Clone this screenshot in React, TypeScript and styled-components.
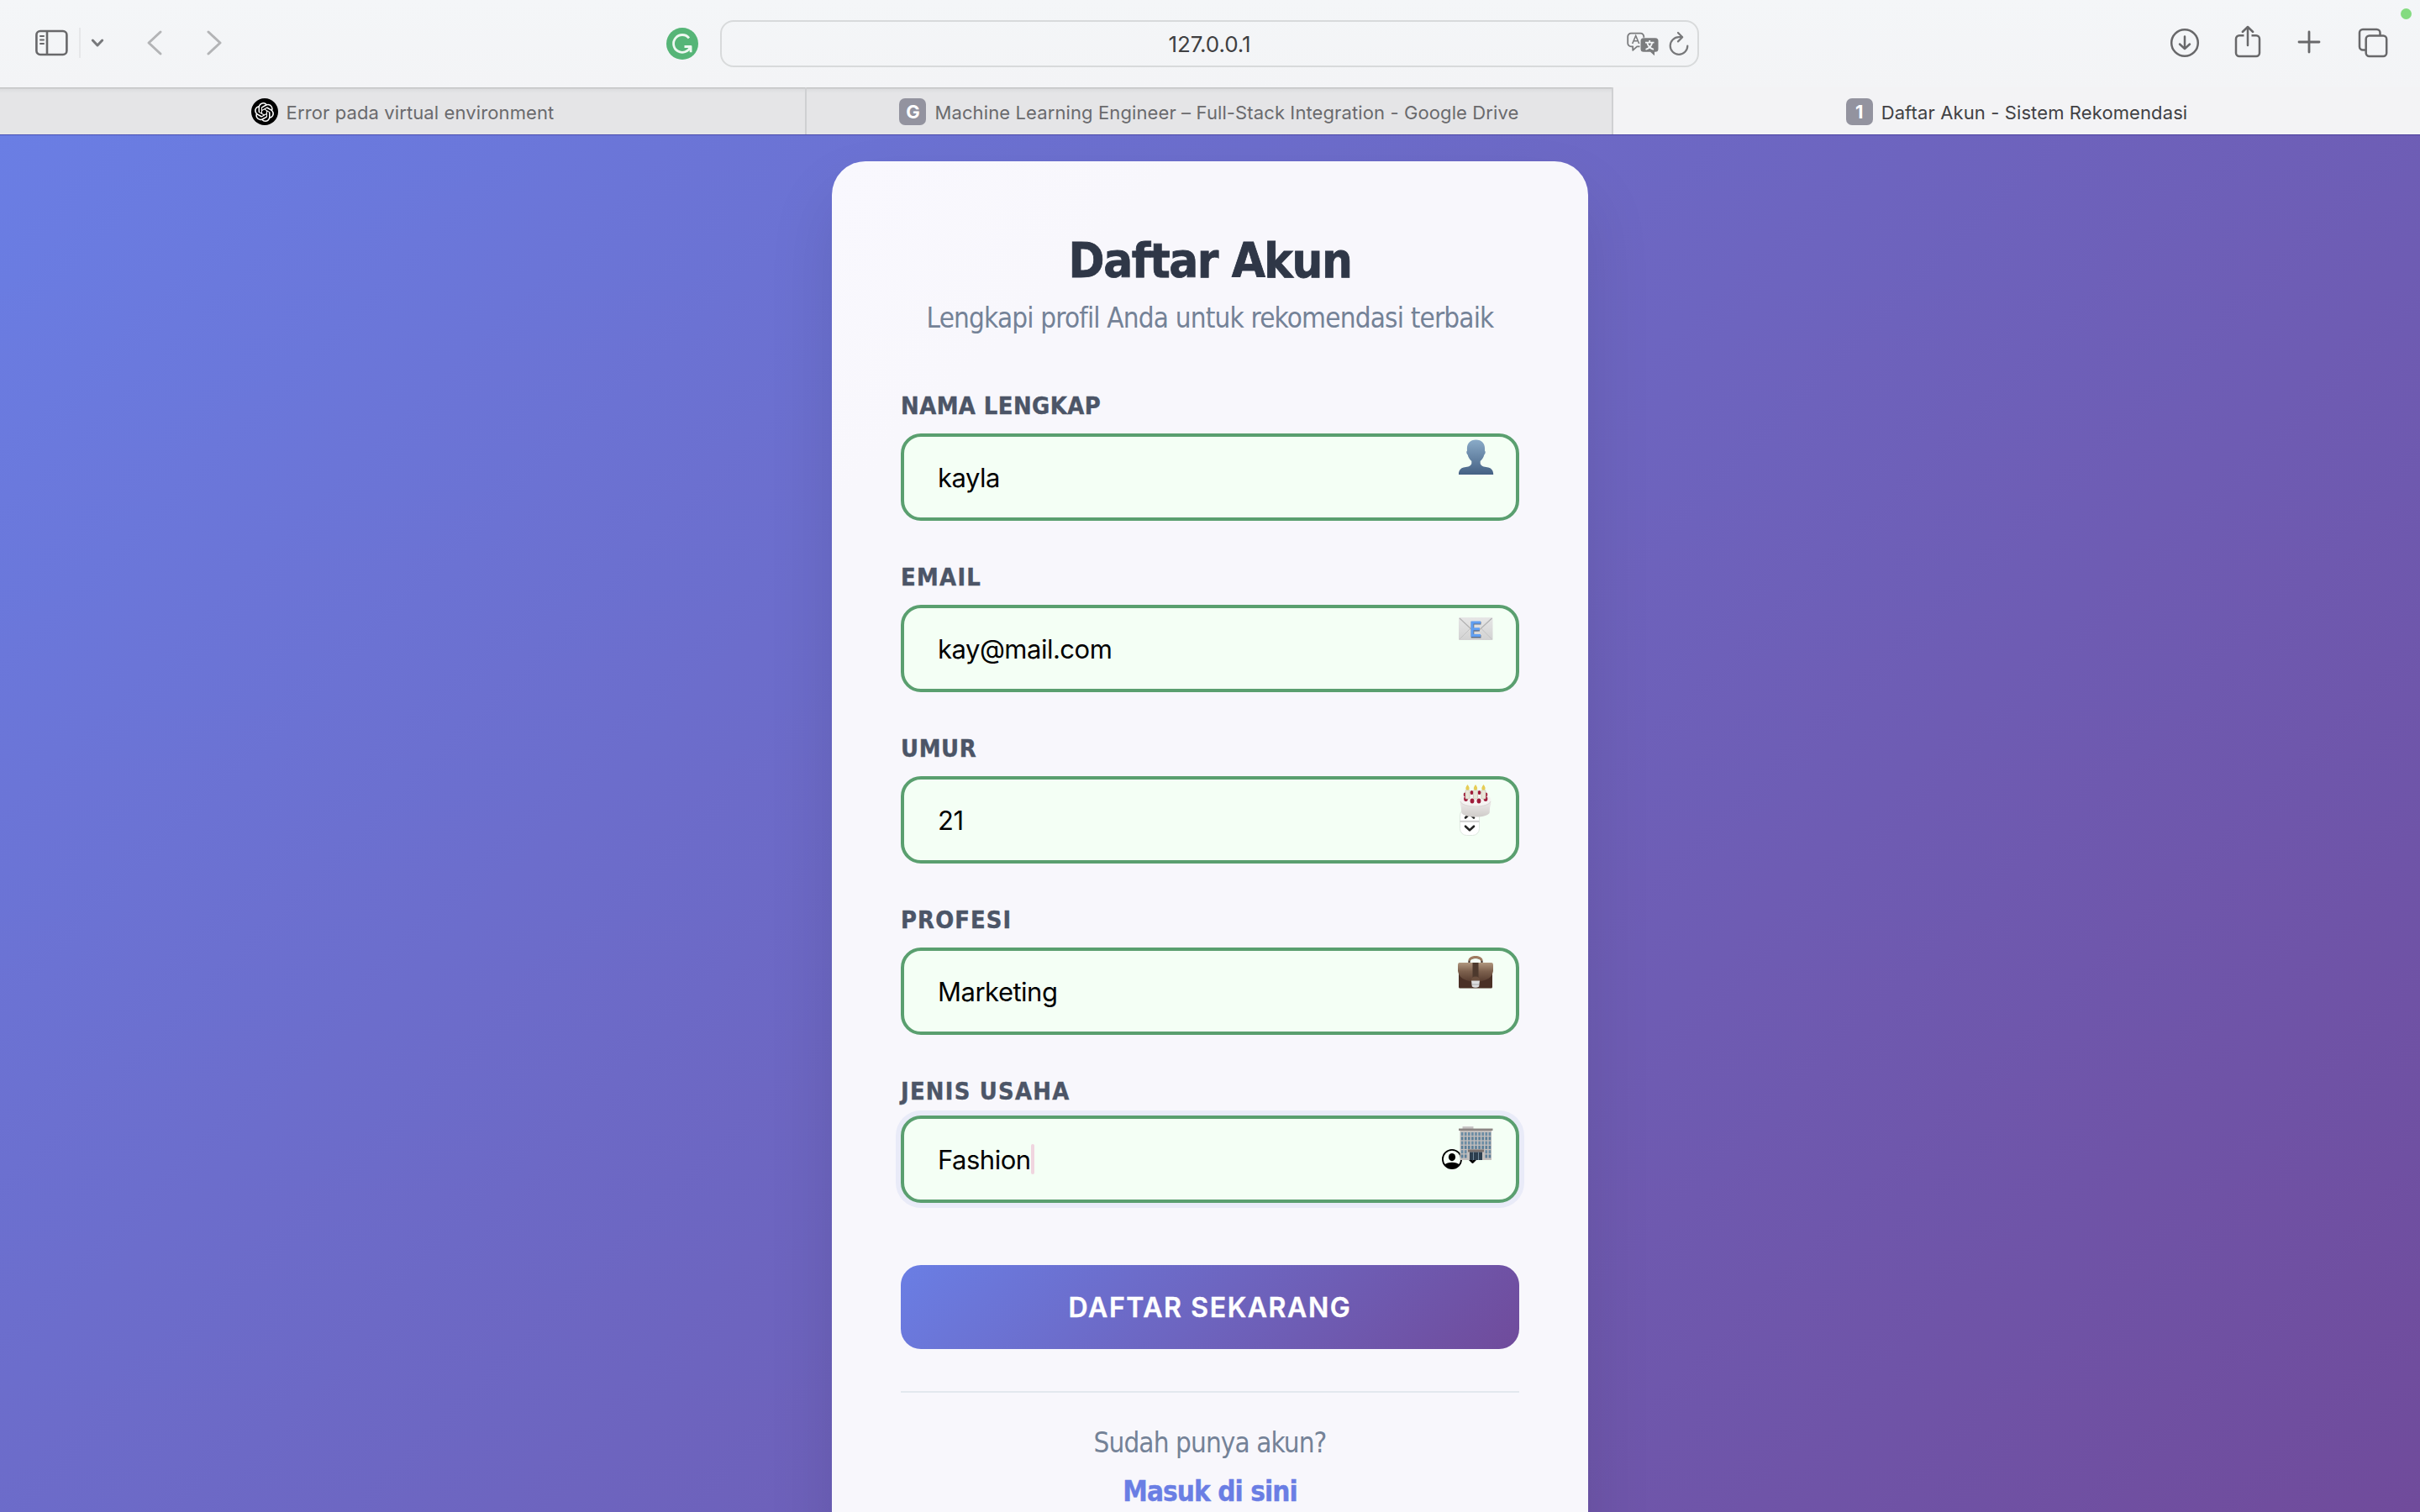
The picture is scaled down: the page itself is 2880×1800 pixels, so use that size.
import React from "react";
import styled, { createGlobalStyle } from "styled-components";
import { SiOpenai } from "react-icons/si";

const UI = `Inter, "Liberation Sans", sans-serif`;
const TAHOMA = `"DejaVu Sans Condensed", "DejaVu Sans", sans-serif`;

const Global = createGlobalStyle`
  *, *::before, *::after { box-sizing: border-box; }
  html, body, #root { margin: 0; height: 100%; }
  body { overflow: hidden; }
  svg { display: block; flex: none; }
`;

const Window = styled.div`
  width: 2880px;
  height: 1800px;
  display: flex;
  flex-direction: column;
  overflow: hidden;
  font-family: ${UI};
`;

const Toolbar = styled.header`
  flex: none;
  height: 104px;
  display: grid;
  grid-template-columns: 793px 64px 1165px 1fr;
  align-items: start;
  background: linear-gradient(#f4f6f8, #f3f4f6);
  color: #68686a;
`;

const NavGroup = styled.div`
  display: flex;
  align-items: center;
  height: 102px;
  padding-left: 42px;
`;

const Separator = styled.span`
  width: 2px;
  height: 36px;
  margin: 0 12px 0 13px;
  background: #e6e7e9;
`;

const Slot = styled.div<{ $left?: number; $top?: number }>`
  padding: ${(p) => p.$top ?? 0}px 0 0;
  margin-left: ${(p) => p.$left ?? 0}px;
`;

const Address = styled.div`
  height: 56px;
  margin-top: 24px;
  border: 2px solid #d8dadb;
  border-radius: 16px;
  display: grid;
  grid-template-columns: 1fr auto 1fr;
  align-items: center;
`;

const Url = styled.span`
  grid-column: 2;
  font-size: 26px;
  letter-spacing: -0.1px;
  color: #3f4042;
  padding-top: 1px;
`;

const AddressTools = styled.div`
  display: flex;
  justify-content: flex-end;
  align-items: center;
  gap: 12px;
  padding-right: 10px;
`;

const Actions = styled.div`
  display: flex;
  justify-content: flex-end;
  padding-right: 38px;
  align-items: flex-start;
  position: relative;
`;

const CameraDot = styled.span`
  position: absolute;
  right: 10px;
  top: 10px;
  width: 13px;
  height: 13px;
  border-radius: 50%;
  background: #84db80;
`;

const TabBar = styled.nav`
  flex: none;
  height: 56px;
  display: grid;
  grid-template-columns: 960px 960px 960px;
`;

const Tab = styled.div<{ $active?: boolean }>`
  display: flex;
  align-items: center;
  justify-content: center;
  gap: 10px;
  font-size: 22px;
  white-space: nowrap;
  padding-top: 2px;
  color: ${(p) => (p.$active ? "#414144" : "#6a6a6d")};
  border-right: ${(p) => (p.$active ? "0" : "2px solid #cfd0d2")};
  background: ${(p) =>
    p.$active
      ? "#f3f3f5"
      : "linear-gradient(#c3c4c5 0, #c3c4c5 1px, #dcdddf 2px, #e5e5e7 7px, #e5e5e7 100%)"};
`;

const TabLabel = styled.span`
  padding-top: 1px;
  letter-spacing: 0.11px;
`;

const Badge = styled.span`
  width: 32px;
  height: 32px;
  border-radius: 7px;
  background: #93939f;
  color: #fff;
  font-weight: 700;
  font-size: 22px;
  line-height: 33px;
  text-align: center;
`;

const RoundIcon = styled.span`
  width: 32px;
  height: 32px;
  border-radius: 50%;
  background: #000;
  color: #fff;
  display: grid;
  place-items: center;
`;

const Page = styled.main`
  flex: 1;
  min-height: 0;
  overflow: hidden;
  display: flex;
  justify-content: center;
  align-items: flex-start;
  padding-top: 32px;
  background:
    linear-gradient(rgba(20, 10, 110, 0.4) 0 1px, transparent 1px),
    linear-gradient(135deg, #6a7ee4 0%, #704b9b 100%);
`;

const Card = styled.section`
  flex: none;
  width: 900px;
  height: 1720px;
  padding: 82px;
  border-radius: 40px;
  background: linear-gradient(135deg, #f9f8fe 0, #f8f7fc 300px);
  box-shadow: 0 40px 80px rgba(0, 0, 0, 0.1);
  font-family: ${TAHOMA};
  display: flex;
  flex-direction: column;
`;

const Title = styled.h1`
  margin: 0;
  height: 74px;
  line-height: 74px;
  font-size: 57.6px;
  font-weight: 700;
  letter-spacing: -1.4px;
  -webkit-text-stroke: 0.8px #2f3747;
  text-align: center;
  white-space: nowrap;
  color: #2f3747;
`;

const Subtitle = styled.p`
  margin: 11px 0 61px;
  height: 40px;
  line-height: 40px;
  font-size: 33px;
  letter-spacing: -0.83px;
  text-align: center;
  white-space: nowrap;
  color: #748297;
`;

const Field = styled.div`
  height: 204px;
  display: flex;
  flex-direction: column;
`;

const Label = styled.label`
  height: 56px;
  padding-top: 6px;
  line-height: 34px;
  font-size: 28.8px;
  font-weight: 700;
  -webkit-text-stroke: 0.4px #4c5567;
  color: #4c5567;
`;

const Spaced = styled.span<{ $spacing: number }>`
  letter-spacing: ${(p) => p.$spacing}px;
`;

const Control = styled.div<{ $focused?: boolean }>`
  position: relative;
  height: 104px;
  margin-top: ${(p) => (p.$focused ? -4 : 0)}px;
  padding-left: 40px;
  border: 4px solid #5a9f6f;
  border-radius: 24px;
  background: #f4fff5;
  box-shadow: ${(p) => (p.$focused ? "0 0 0 6px #e9ebf8" : "none")};
  display: flex;
  align-items: center;
  font-family: ${UI};
  font-size: 31px;
  color: #000;
`;

const Caret = styled.span`
  width: 4px;
  height: 36px;
  border-radius: 2px;
  background: #f0d5df;
`;

const Overlay = styled.span<{ $x: number; $y: number }>`
  position: absolute;
  left: ${(p) => p.$x}px;
  top: ${(p) => p.$y}px;
`;

const Submit = styled.button`
  flex: none;
  height: 100px;
  margin: 26px 0 50px;
  border: 0;
  padding: 0;
  border-radius: 24px;
  background: linear-gradient(135deg, #6a7ee4 0%, #704b9b 100%);
  color: #fff;
  font-family: ${UI};
  font-size: 32px;
  font-weight: 600;
  letter-spacing: 1.6px;
  -webkit-text-stroke: 0.4px #fff;
`;

const Footer = styled.footer`
  border-top: 2px solid #e3e8ee;
  padding-top: 40px;
  display: flex;
  flex-direction: column;
  align-items: center;
  font-size: 33px;
  letter-spacing: -0.92px;
  line-height: 40px;
  color: #748297;
  white-space: nowrap;
`;

const Login = styled.a`
  margin-top: 18px;
  font-weight: 700;
  -webkit-text-stroke: 0.4px #6a7ee4;
  color: #6a7ee4;
`;

const SidebarIcon = () => (
  <svg width="39" height="32" viewBox="0 0 39 32" fill="none" stroke="#68686a" strokeWidth="2.6">
    <rect x="1.4" y="2" width="36" height="28" rx="4.5" />
    <path d="M14 2v28" />
    <path d="M6 8h4M6 12.500h4M6 17h4" strokeWidth="2" strokeLinecap="round" />
  </svg>
);

const SmallChevron = () => (
  <svg width="16" height="12" viewBox="0 0 16 12" fill="none" stroke="#77787b" strokeWidth="3" strokeLinecap="round" strokeLinejoin="round">
    <path d="M2.300 3 8 9l5.700-6" />
  </svg>
);

const Chevron = ({ flip }: { flip?: boolean }) => (
  <svg width="20" height="32" viewBox="0 0 20 32" fill="none" stroke="#b3b4b6" strokeWidth="3" strokeLinecap="round" strokeLinejoin="round">
    <path d={flip ? "M3 3l14 13L3 29" : "M17 3 3 16l14 13"} />
  </svg>
);

const GrammarlyIcon = () => (
  <svg width="38" height="38" viewBox="0 0 38 38">
    <circle cx="19" cy="19" r="19" fill="#56b577" />
    <path d="M27 12.300A10.400 10.400 0 1 0 28.600 22.800M21.500 22.500h7.600v6.800" fill="none" stroke="#eef8f1" strokeWidth="2.800" strokeLinejoin="round" />
  </svg>
);

const TranslateIcon = () => (
  <svg width="38" height="30" viewBox="0 0 38 30">
    <path d="M15.500 18.300h-3.300L7.200 22.800v-4.500H5a3.800 3.800 0 0 1-3.800-3.800V6.500A3.800 3.800 0 0 1 5 2.700h11.500a3.800 3.800 0 0 1 3.800 3.800v1.200" fill="none" stroke="#7b7c7e" strokeWidth="1.800" strokeLinejoin="round" />
    <path d="M6.700 15 10.700 5.500 14.700 15M8.200 11.800h5" fill="none" stroke="#7b7c7e" strokeWidth="1.600" />
    <path d="M20 8.300h14a3.500 3.500 0 0 1 3.500 3.500v9.500a3.500 3.500 0 0 1-3.500 3.500h-1v4.500l-5-4.500h-8a3.500 3.500 0 0 1-3.500-3.500v-9.500A3.500 3.500 0 0 1 20 8.300Z" fill="#7b7c7e" />
    <path d="M22 13.700h10.500M27.200 11v2.700M30.300 13.700c-1 4.200-3.800 6.900-7.800 8.200M24.200 13.700c1 4.200 3.800 6.900 7.800 8.200" fill="none" stroke="#f4f6f8" strokeWidth="1.800" />
  </svg>
);

const ReloadIcon = () => (
  <svg width="24" height="32" viewBox="0 0 24 32" fill="none" stroke="#77787a" strokeWidth="2.200" strokeLinecap="round" strokeLinejoin="round">
    <path d="M15.500 8.200H12A10.300 10.300 0 1 0 22.300 18.500" />
    <path d="M11 3l5.200 5.200L11 13.400" />
  </svg>
);

const DownloadIcon = () => (
  <svg width="36" height="36" viewBox="0 0 36 36" fill="none" stroke="#68686a" strokeWidth="2.500" strokeLinecap="round" strokeLinejoin="round">
    <circle cx="18" cy="18" r="15.800" />
    <path d="M18 10.500v14.500M12 19.500l6 5.700 6-5.700" />
  </svg>
);

const ShareIcon = () => (
  <svg width="32" height="40" viewBox="0 0 32 40" fill="none" stroke="#68686a" strokeWidth="2.500" strokeLinejoin="round">
    <path d="M11.500 13.300H6a4 4 0 0 0-4 4V34a4 4 0 0 0 4 4h20a4 4 0 0 0 4-4V17.300a4 4 0 0 0-4-4h-5.500" />
    <path d="M16 25V3M9.800 9 16 3l6.200 6" strokeLinecap="round" />
  </svg>
);

const PlusIcon = () => (
  <svg width="28" height="28" viewBox="0 0 28 28" fill="none" stroke="#68686a" strokeWidth="2.800" strokeLinecap="round">
    <path d="M14 2v24M2 14h24" />
  </svg>
);

const TabsIcon = () => (
  <svg width="36" height="36" viewBox="0 0 36 36" fill="none" stroke="#68686a" strokeWidth="2.500">
    <path d="M9.500 26.500H6a4 4 0 0 1-4-4V6a4 4 0 0 1 4-4h16.500a4 4 0 0 1 4 4v3" />
    <rect x="9.700" y="9.500" width="24.500" height="24.500" rx="4" />
  </svg>
);

const PersonEmoji = () => (
  <svg width="42" height="42" viewBox="0 0 42 42">
    <defs>
      <linearGradient id="person" x1="0" y1="0" x2="0" y2="1">
        <stop offset="0" stopColor="#8aabc8" />
        <stop offset="1" stopColor="#456184" />
      </linearGradient>
    </defs>
    <path d="M20.500 0.500c7 0 10.800 4.500 10.600 11l-.1 2c1.200.8.8 4-.7 5-.7 3-2.600 5.500-4.600 7.500v3c1.500 4 6 3.500 9.500 4.500 4 1 6 4 6 8.500H-.2c0-4.500 2-7.500 6-8.500 3.500-1 8-.5 9.500-4.500v-3c-2-2-3.900-4.500-4.600-7.500-1.500-1-1.900-4.200-.7-5l-.1-2C9.700 5 13.500.5 20.500.5Z" fill="url(#person)" />
  </svg>
);

const MailEmoji = () => (
  <svg width="41" height="27" viewBox="0 0 41 27">
    <defs>
      <linearGradient id="mail" x1="0" y1="0" x2="0" y2="1">
        <stop offset="0" stopColor="#e6e6e6" />
        <stop offset="1" stopColor="#d2d2d2" />
      </linearGradient>
    </defs>
    <rect width="40.500" height="27" rx="1" fill="url(#mail)" />
    <path d="M1 26 14 13M39.500 26 26.500 13" stroke="#c3c3c3" strokeWidth="1" />
    <path d="M1 1l15 14q4.200 3 8.500 0L39.500 1" fill="none" stroke="#b2b2b2" strokeWidth="1.200" />
    <path d="M26.500 6.800H16.500v16h10M16.500 14.700h8.500" fill="none" stroke="#5f6f88" strokeWidth="3.600" />
    <path d="M26 6H16v15.500h10M16 13.700h9" fill="none" stroke="#609ff2" strokeWidth="3" />
  </svg>
);

const StepperIcon = () => (
  <svg width="26" height="34" viewBox="0 0 26 34">
    <rect x="1.500" y="1" width="23" height="31.500" rx="8" fill="#fff" stroke="#dfe8e0" strokeWidth="1" />
    <path d="M1.500 15.800h23" stroke="#cfcfcf" strokeWidth="2" />
    <path d="M8 11.500l5-4.500 5 4.500M8 21.700l5 4.700 5-4.700" fill="none" stroke="#222" strokeWidth="2.600" strokeLinecap="round" strokeLinejoin="round" />
  </svg>
);

const CakeEmoji = () => (
  <svg width="38" height="39" viewBox="0 0 38 39">
    <defs>
      <linearGradient id="cake" x1="0" y1="0" x2="0" y2="1">
        <stop offset="0" stopColor="#f1efee" />
        <stop offset="1" stopColor="#cfcbc9" />
      </linearGradient>
    </defs>
    <path d="M.8 18v5.500C1.500 25 2 27 2.200 33c.3 3.500 8 5.500 16.800 5.500S35.500 36.500 35.800 33c.2-6 .7-8 1.400-9.500V18Z" fill="url(#cake)" />
    <ellipse cx="19" cy="18" rx="18.300" ry="8.500" fill="#f5f3f2" />
    <path d="M1 20c2 8 34 8 36 0" fill="none" stroke="#d9d6d4" strokeWidth="1" />
    <g fill="#a01c3a">
      <ellipse cx="6.500" cy="12" rx="1.800" ry="2.400" />
      <ellipse cx="14.500" cy="9.500" rx="2" ry="2.500" />
      <ellipse cx="23.500" cy="9.500" rx="2" ry="2.500" />
      <ellipse cx="31.500" cy="12" rx="1.800" ry="2.400" />
      <ellipse cx="7.500" cy="17" rx="2.400" ry="3" />
      <ellipse cx="15" cy="19.500" rx="2.400" ry="3" />
      <ellipse cx="23" cy="19.500" rx="2.400" ry="3" />
      <ellipse cx="31" cy="17" rx="2.400" ry="3" />
    </g>
    <g fill="#e9e5d8" stroke="#c8c3b4" strokeWidth=".7">
      <rect x="7" y="6.500" width="5" height="10.500" rx="1" />
      <rect x="16.500" y="6.500" width="5" height="10.500" rx="1" />
      <rect x="26" y="6.500" width="5" height="10.500" rx="1" />
    </g>
    <g fill="#e6cd55">
      <path d="M9.500 0c4 5 1.500 6.500 0 6.500S5.500 5 9.500 0ZM19 0c4 5 1.500 6.500 0 6.500S15 5 19 0ZM28.500 0c4 5 1.500 6.500 0 6.500S24.500 5 28.500 0Z" />
    </g>
  </svg>
);

const BriefcaseEmoji = () => (
  <svg width="42" height="39" viewBox="0 0 42 39">
    <defs>
      <linearGradient id="flap" x1="0" y1="0" x2="0" y2="1">
        <stop offset="0" stopColor="#b0977f" />
        <stop offset=".45" stopColor="#7d614e" />
        <stop offset="1" stopColor="#563b2e" />
      </linearGradient>
    </defs>
    <path d="M13.500 8V6q1-4 7.500-4t7.500 4v2" fill="none" stroke="#4a372f" strokeWidth="2.200" />
    <path d="M14 4.500Q16 1.300 21 1.300t7 3.200" fill="none" stroke="#a17c61" strokeWidth="2.800" strokeLinecap="round" />
    <rect x="1" y="9" width="40" height="29.500" rx="1.500" fill="#4a3026" />
    <path d="M2 8h38q2 0 2 3v7q-1 8-10 11-11 4-22 0Q1 26 0 18v-7q0-3 2-3Z" fill="url(#flap)" />
    <rect x="17.500" y="8" width="7" height="19" fill="#4d392d" />
    <path d="M16 29q0-4.500 5-4.500t5 4.500Z" fill="#6b4f3e" />
    <path d="M16 29.500h10l-.8 7q-4.200 2.500-8.400 0Z" fill="#dcdddf" />
    <path d="M17 34h8" stroke="#a9aaac" strokeWidth="1" />
  </svg>
);

const BuildingEmoji = () => (
  <svg width="41" height="40" viewBox="0 0 41 40">
    <rect x="4.500" y="0" width="13" height="4" fill="#c6c3c3" />
    <rect x="1.500" y="4" width="37.500" height="36" fill="#c2bebc" />
    <rect x="0" y="2.500" width="40.500" height="2.500" fill="#8b8583" />
    {[7, 12.3, 17.6, 22.9, 28.2, 33.5].map((y, r) =>
      Array.from({ length: 9 }, (_, c) =>
        r > 3 && c > 1 && c < 7 ? null : (
          <rect key={`${r}-${c}`} x={2.8 + c * 4.1} y={y} width="2.600" height="4" fill={r % 2 ? "#5b7f99" : "#6b8ca4"} />
        )
      )
    )}
    <rect x="11" y="27.500" width="19" height="3" fill="#7a716e" />
    <rect x="13" y="30.500" width="15" height="9.500" fill="#2c3e4e" />
    <path d="M17.500 30.500V40M23.500 30.500V40" stroke="#71889a" strokeWidth="1" />
  </svg>
);

const AutofillIcon = () => (
  <svg width="46" height="24" viewBox="0 0 46 24">
    <circle cx="12" cy="12" r="11.100" fill="none" stroke="#000" strokeWidth="1.800" />
    <ellipse cx="12" cy="9.600" rx="4.100" ry="4.600" fill="#000" />
    <path d="M3.500 18.500Q6 15.800 12 15.800t8.500 2.700Q17.500 23.300 12 23.300T3.500 18.500Z" fill="#000" />
    <path d="M32.500 11.500l4 4 4-4" fill="none" stroke="#000" strokeWidth="2.800" strokeLinecap="round" strokeLinejoin="round" />
  </svg>
);

type FieldData = {
  label: string;
  labelSpacing: number;
  value: string;
  focused?: boolean;
  art: React.ReactNode;
};

const fields: FieldData[] = [
  { label: "NAMA LENGKAP", labelSpacing: 0.45, value: "kayla", art: <Overlay $x={660} $y={3}><PersonEmoji /></Overlay> },
  { label: "EMAIL", labelSpacing: 1.3, value: "kay@mail.com", art: <Overlay $x={660} $y={11}><MailEmoji /></Overlay> },
  {
    label: "UMUR", labelSpacing: 0.6, value: "21",
    art: (
      <>
        <Overlay $x={660} $y={34}><StepperIcon /></Overlay>
        <Overlay $x={661} $y={6}><CakeEmoji /></Overlay>
      </>
    ),
  },
  { label: "PROFESI", labelSpacing: 1.1, value: "Marketing", art: <Overlay $x={659} $y={6}><BriefcaseEmoji /></Overlay> },
  {
    label: "JENIS USAHA", labelSpacing: 1.25, value: "Fashion", focused: true,
    art: (
      <>
        <Overlay $x={640} $y={36}><AutofillIcon /></Overlay>
        <Overlay $x={660} $y={9}><BuildingEmoji /></Overlay>
      </>
    ),
  },
];

export default function App() {
  return (
    <Window>
      <Global />
      <Toolbar>
        <NavGroup>
          <SidebarIcon />
          <Separator />
          <SmallChevron />
          <Slot $left={50}><Chevron /></Slot>
          <Slot $left={51}><Chevron flip /></Slot>
        </NavGroup>
        <Slot $top={33}><GrammarlyIcon /></Slot>
        <Address>
          <Url>127.0.0.1</Url>
          <AddressTools>
            <TranslateIcon />
            <ReloadIcon />
          </AddressTools>
        </Address>
        <Actions>
          <Slot $top={33}><DownloadIcon /></Slot>
          <Slot $left={41} $top={29}><ShareIcon /></Slot>
          <Slot $left={43} $top={36}><PlusIcon /></Slot>
          <Slot $left={44} $top={33}><TabsIcon /></Slot>
          <CameraDot />
        </Actions>
      </Toolbar>
      <TabBar>
        <Tab>
          <RoundIcon><SiOpenai size={23} /></RoundIcon>
          <TabLabel>Error pada virtual environment</TabLabel>
        </Tab>
        <Tab>
          <Badge>G</Badge>
          <TabLabel>Machine Learning Engineer – Full-Stack Integration - Google Drive</TabLabel>
        </Tab>
        <Tab $active>
          <Badge>1</Badge>
          <TabLabel>Daftar Akun - Sistem Rekomendasi</TabLabel>
        </Tab>
      </TabBar>
      <Page>
        <Card>
          <Title>Daftar Akun</Title>
          <Subtitle>Lengkapi profil Anda untuk rekomendasi terbaik</Subtitle>
          {fields.map((f) => (
            <Field key={f.label}>
              <Label><Spaced $spacing={f.labelSpacing}>{f.label}</Spaced></Label>
              <Control $focused={f.focused}>
                <Spaced $spacing={-0.5}>{f.value}</Spaced>
                {f.focused && <Caret />}
                {f.art}
              </Control>
            </Field>
          ))}
          <Submit>DAFTAR SEKARANG</Submit>
          <Footer>
            <span>Sudah punya akun?</span>
            <Login>Masuk di sini</Login>
          </Footer>
        </Card>
      </Page>
    </Window>
  );
}
